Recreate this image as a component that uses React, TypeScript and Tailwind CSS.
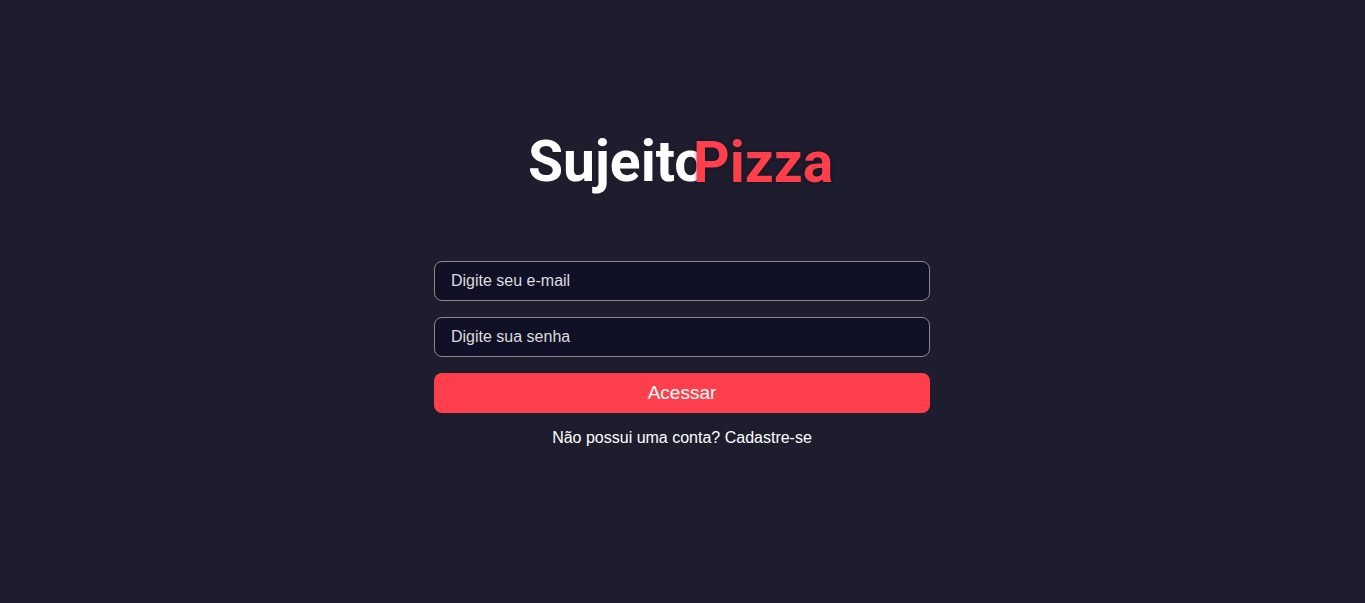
function Logo() {
  return (
    <svg
      role="img"
      aria-label="Sujeito Pizza"
      viewBox="0 0 310 72"
      className="h-[72px] w-[310px] font-['Roboto',sans-serif] text-[57px] font-bold"
    >
      <text x="1" y="56" className="fill-white">Sujeito</text>
      <text x="166" y="57" className="fill-[#ff3f4b] drop-shadow-[0_0_2px_rgba(0,0,0,0.45)]">Pizza</text>
    </svg>
  );
}

const fieldClass =
  "h-10 w-full rounded-lg border border-[#8a8a8a] bg-[#101026] px-4 text-base text-white placeholder:text-[#dddddd] focus:outline-none focus:border-white";

export default function App() {
  return (
    <div className="flex min-h-screen flex-col items-center justify-center bg-[#1d1d2e] pr-[17px] pb-7 pl-4 font-['Liberation_Sans',Arial,sans-serif] text-white">
      <Logo />
      <main className="mt-16 flex w-full max-w-[496px] flex-col">
        <form className="flex flex-col gap-4" onSubmit={(e) => e.preventDefault()}>
          <input type="email" aria-label="Digite seu e-mail" placeholder="Digite seu e-mail" className={fieldClass} />
          <input type="password" aria-label="Digite sua senha" placeholder="Digite sua senha" className={fieldClass} />
          <button type="submit" className="h-10 w-full cursor-pointer rounded-lg bg-[#ff3f4b] text-[19px]">
            Acessar
          </button>
        </form>
        <a href="#cadastro" className="mt-[13px] self-center text-base">
          Não possui uma conta? Cadastre-se
        </a>
      </main>
    </div>
  );
}
